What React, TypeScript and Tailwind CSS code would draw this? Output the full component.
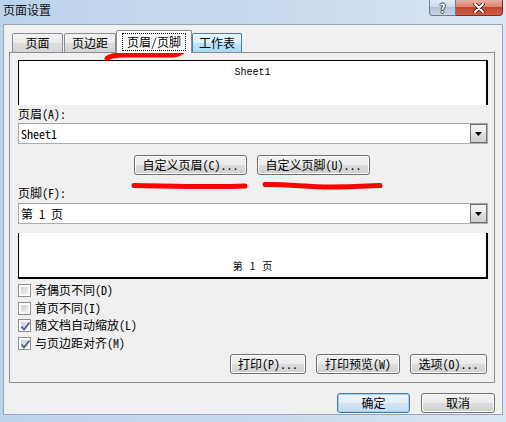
import React from "react";

const FONT = "font-['Noto_Sans_Mono_CJK_SC','Noto_Sans_CJK_SC',sans-serif]";

const btnBase =
  "flex h-[20px] items-center justify-center rounded-[3px] border text-[12px] leading-[14px] text-black";
const btnGray =
  "border-[#707070] bg-[linear-gradient(#f2f2f2_0%,#ebebeb_50%,#dddddd_50%,#cfcfcf_100%)] shadow-[inset_0_0_0_1px_#fbfbfb]";
const btnDefault =
  "border-[#3c7fb1] bg-[linear-gradient(#eef6fc_0%,#e2eef8_50%,#d2e5f3_50%,#c4dcee_100%)] shadow-[inset_0_0_0_1px_#9fd1ef]";

function WinButton({ label, width, primary }: { label: string; width: string; primary?: boolean }) {
  return <div className={`${btnBase} ${primary ? btnDefault : btnGray} ${width}`}>{label}</div>;
}

function Combo({ children }: { children: React.ReactNode }) {
  return (
    <div className="flex h-[21px] w-[470px] border border-[#abadb3] border-t-[#a3a3a3] bg-white">
      <div className="flex flex-1 items-center pl-[2px] text-[12px] leading-[14px] text-black">{children}</div>
      <div className="flex w-[17px] items-center justify-center border border-[#707070] bg-[linear-gradient(#f2f2f2_0%,#ebebeb_50%,#dddddd_50%,#cfcfcf_100%)]">
        <svg width="7" height="4" viewBox="0 0 7 4">
          <path d="M0 0H7L3.5 4Z" fill="#000" />
        </svg>
      </div>
    </div>
  );
}

function CheckBox({ checked, label, row }: { checked: boolean; label: string; row: string }) {
  return (
    <div className={`flex items-start gap-[4px] ${row}`}>
      <div className="relative h-[13px] w-[13px] border border-[#8f8f8f] bg-white p-[2px]">
        <div className="h-full w-full bg-[linear-gradient(135deg,#c9cdd3,#f4f4f4)]" />
        {checked && (
          <svg className="absolute inset-0" width="13" height="13" viewBox="0 0 13 13">
            <path d="M2.5 6.5L5 9.5L10.5 2.5" fill="none" stroke="#4a5d95" strokeWidth="1.9" />
          </svg>
        )}
      </div>
      <span className="-mt-[1px] text-[12px] leading-[14px] text-black">{label}</span>
    </div>
  );
}

export default function App() {
  const tabs = [
    { label: "页面", w: "w-[51px]", ml: "" },
    { label: "页边距", w: "w-[52px]", ml: "ml-[1px]" },
  ];

  return (
    <div className={`relative h-[422px] w-[506px] overflow-hidden bg-[linear-gradient(90deg,#bcd3ec,#c9dbef_55%,#d9e6f4)] ${FONT}`}>
      {/* title bar */}
      <div className="flex h-[24px] items-start justify-between">
        <div className="pl-[3px] pt-[3px] text-[12px] leading-[14px] text-[#111]">页面设置</div>
        <div className="mr-[3px] flex">
          <div className="flex h-[16px] w-[27px] items-center justify-center rounded-bl-[4px] border border-t-0 border-[#6d7c90] bg-[linear-gradient(#e2e9f2_0%,#cdd8e6_50%,#b5c5d9_50%,#c6d4e5_100%)]">
            <span className="text-[12px] font-bold leading-[12px] text-white [text-shadow:1px_0_#3a4453,-1px_0_#3a4453,0_1px_#3a4453,0_-1px_#3a4453]">?</span>
          </div>
          <div className="flex h-[16px] w-[47px] items-center justify-center rounded-br-[4px] border border-l-0 border-t-0 border-[#7a2f24] bg-[linear-gradient(#eab1a3_0%,#d8826e_45%,#c4442f_50%,#d0604a_100%)]">
            <svg width="12" height="10" viewBox="0 0 12 10">
              <path d="M2 1L10 9M10 1L2 9" stroke="#3b1a14" strokeWidth="3.6" strokeLinecap="round" />
              <path d="M2 1L10 9M10 1L2 9" stroke="#ffffff" strokeWidth="2" strokeLinecap="round" />
            </svg>
          </div>
        </div>
      </div>

      {/* client area */}
      <div className="ml-[3px] flex h-[391px] w-[500px] flex-col border border-[#98a6b8] bg-[#f0f0f0]">
        {/* tabs */}
        <div className="ml-[8px] mt-[5px] flex h-[23px] items-end">
          {tabs.map((t) => (
            <div
              key={t.label}
              className={`mb-px flex h-[19px] items-center justify-center rounded-t-[2px] border border-b-0 border-[#898c95] bg-[linear-gradient(#f3f3f3_0%,#ebebeb_50%,#dddddd_50%,#d4d4d4_100%)] text-[12px] leading-[14px] ${t.w} ${t.ml}`}
            >
              {t.label}
            </div>
          ))}
          <div className="relative z-10 flex h-[23px] w-[76px] items-start justify-center rounded-t-[2px] border border-b-0 border-[#898c95] bg-white pt-[2px]">
            <span className="border border-dotted border-black px-[4px] py-px text-[12px] leading-[14px]">页眉/页脚</span>
          </div>
          <div className="mb-px flex h-[19px] w-[50px] items-center justify-center rounded-t-[2px] border border-b-0 border-[#3c7fb1] bg-[linear-gradient(#eaf6fd_0%,#d9f0fc_50%,#bee6fd_50%,#a7d9f5_100%)] text-[12px] leading-[14px]">
            工作表
          </div>
        </div>

        {/* tab page */}
        <div className="-mt-px ml-[5px] flex h-[331px] w-[486px] flex-col border border-[#898c95] pl-[8px]">
          <div className="mt-[7px] flex h-[45px] w-[470px] justify-center border-l border-r-2 border-t border-black bg-white pt-[7px]">
            <span className="font-['Liberation_Mono',monospace] text-[10px] leading-[10px]">Sheet1</span>
          </div>

          <div className="mt-[2px] text-[12px] leading-[14px]">页眉(A):</div>
          <div className="mt-[2px]">
            <Combo>Sheet1</Combo>
          </div>

          <div className="mt-[11px] flex w-[470px] justify-center gap-[10px] pr-[2px]">
            <WinButton label="自定义页眉(C)..." width="w-[113px]" />
            <WinButton label="自定义页脚(U)..." width="w-[113px]" />
          </div>

          <div className="mt-[11px] text-[12px] leading-[14px]">页脚(F):</div>
          <div className="mt-[3px]">
            <Combo>第 1 页</Combo>
          </div>

          <div className="mt-[9px] flex h-[46px] w-[470px] items-end justify-center border-b-2 border-l border-r-2 border-black bg-white pb-[6px]">
            <div className="flex items-center gap-[7px] font-['Noto_Sans_CJK_SC',sans-serif] text-[10px] leading-[10px]">
              <span>第</span>
              <span>1</span>
              <span>页</span>
            </div>
          </div>

          <div className="mt-[5px] flex flex-col">
            <CheckBox checked={false} label="奇偶页不同(D)" row="h-[18px]" />
            <CheckBox checked={false} label="首页不同(I)" row="h-[17px]" />
            <CheckBox checked label="随文档自动缩放(L)" row="h-[18px]" />
            <CheckBox checked label="与页边距对齐(M)" row="h-[13px]" />
          </div>

          <div className="mt-[4px] flex w-[469px] justify-end gap-[10px]">
            <WinButton label="打印(P)..." width="w-[76px]" />
            <WinButton label="打印预览(W)" width="w-[84px]" />
            <WinButton label="选项(O)..." width="w-[77px]" />
          </div>
        </div>

        {/* dialog buttons */}
        <div className="mt-[10px] flex justify-end gap-[11px] pr-[7px]">
          <WinButton label="确定" width="w-[73px]" primary />
          <WinButton label="取消" width="w-[74px]" />
        </div>
      </div>

      {/* red hand-drawn annotations */}
      <svg className="pointer-events-none absolute inset-0" width="506" height="422" viewBox="0 0 506 422">
        <g fill="none" stroke="#ff0000" strokeWidth="5" strokeLinecap="round" strokeLinejoin="round">
          <path d="M107 58.5C110 56 116 55 124 55L172 55C178 55 181 53 183 51" />
          <path d="M134 185.5C170 186 210 187.5 245 186" />
          <path d="M265 184.5C290 184 305 187 330 187C350 187 368 186 380 185.5" />
        </g>
      </svg>
    </div>
  );
}
